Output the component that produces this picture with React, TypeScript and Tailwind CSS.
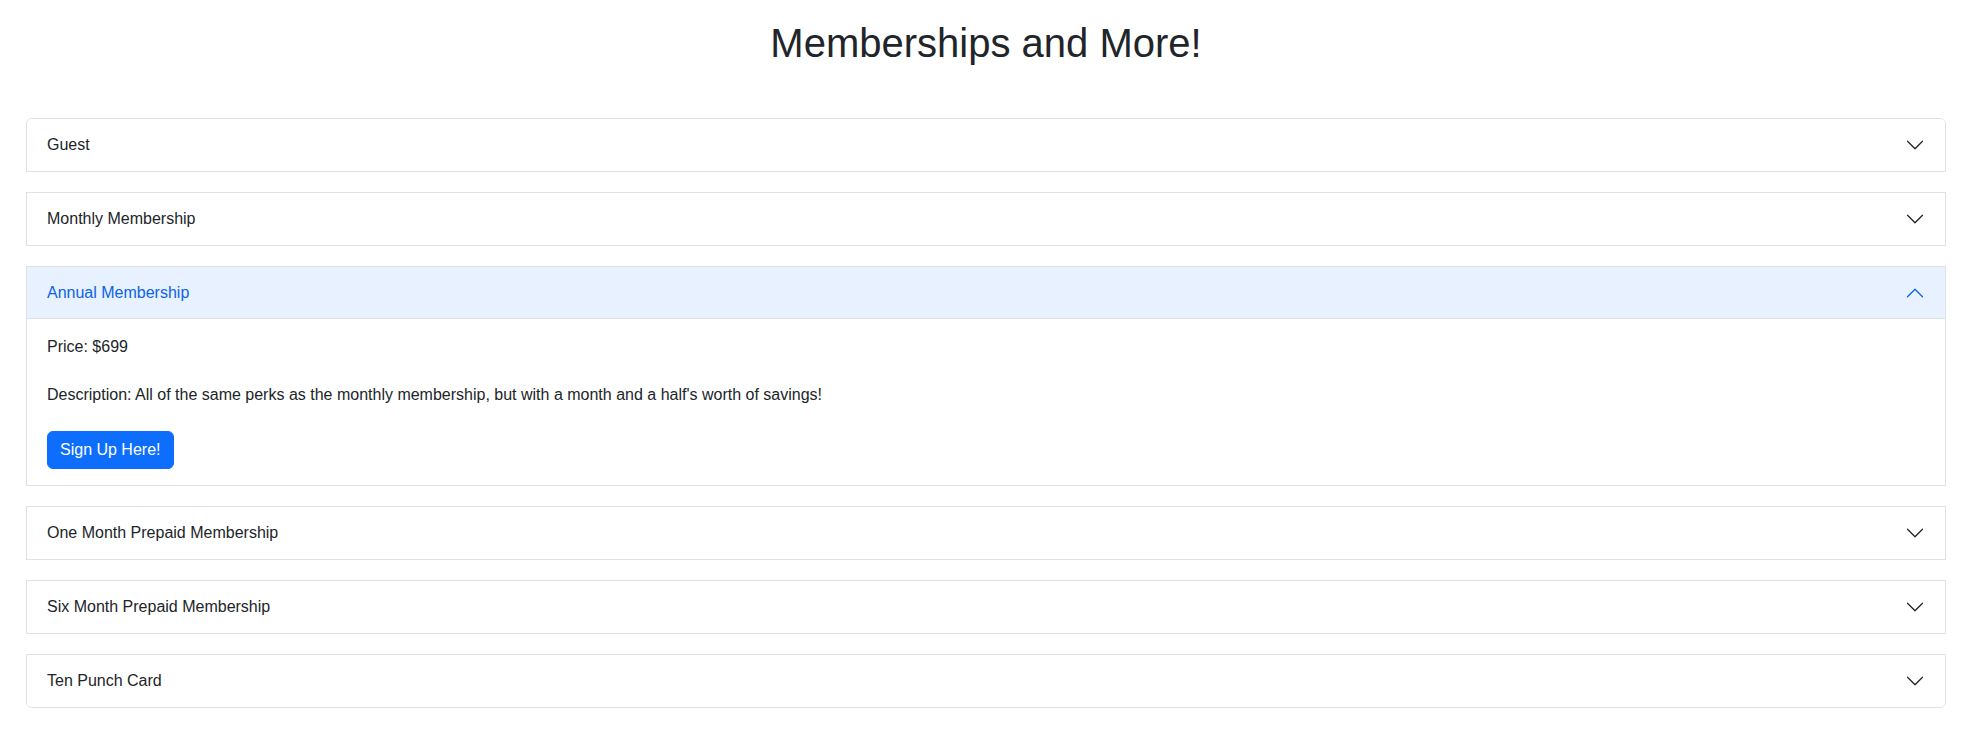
import { useState } from "react";

type Plan = {
  id: string;
  name: string;
  price?: string;
  description?: string;
};

const plans: Plan[] = [
  { id: "guest", name: "Guest" },
  { id: "monthly", name: "Monthly Membership" },
  {
    id: "annual",
    name: "Annual Membership",
    price: "$699",
    description: "All of the same perks as the monthly membership, but with a month and a half's worth of savings!",
  },
  { id: "one-month", name: "One Month Prepaid Membership" },
  { id: "six-month", name: "Six Month Prepaid Membership" },
  { id: "ten-punch", name: "Ten Punch Card" },
];

function Chevron({ open }: { open: boolean }) {
  return (
    <svg
      className={`h-5 w-5 shrink-0 transition-transform ${open ? "rotate-180 text-[#0c63e4]" : "text-[#212529]"}`}
      viewBox="0 0 16 16"
      fill="currentColor"
    >
      <path
        fillRule="evenodd"
        d="M1.646 4.646a.5.5 0 0 1 .708 0L8 10.293l5.646-5.647a.5.5 0 0 1 .708.708l-6 6a.5.5 0 0 1-.708 0l-6-6a.5.5 0 0 1 0-.708z"
      />
    </svg>
  );
}

export default function App() {
  const [open, setOpen] = useState<string | null>("annual");

  return (
    <div className="min-h-screen bg-white pl-[26px] pr-[18px] pt-[19px] font-['Liberation_Sans',Arial,sans-serif] text-[#212529]">
      <h1 className="mb-[51px] text-center text-[40px] leading-[48px] font-normal">Memberships and More!</h1>
      <div>
        {plans.map((plan, i) => {
          const isOpen = open === plan.id;
          const first = i === 0;
          const last = i === plans.length - 1;
          return (
            <div
              key={plan.id}
              className={`mb-5 border border-[#dee2e6] bg-white ${first ? "rounded-t-[6px]" : ""} ${last ? "rounded-b-[6px]" : ""}`}
            >
              <button
                type="button"
                onClick={() => setOpen(isOpen ? null : plan.id)}
                className={`flex w-full items-center justify-between px-5 py-[14px] text-left text-base leading-6 ${
                  isOpen ? "bg-[#e7f1ff] text-[#0c63e4] shadow-[inset_0_-1px_0_#dee2e6]" : "bg-white text-[#212529]"
                } ${first ? "rounded-t-[5px]" : ""} ${last && !isOpen ? "rounded-b-[5px]" : ""}`}
              >
                <span>{plan.name}</span>
                <Chevron open={isOpen} />
              </button>
              {isOpen && (
                <div className="px-5 py-4 text-base leading-6">
                  <p className="mb-6">Price: {plan.price ?? "TBD"}</p>
                  <p className="mb-6">Description: {plan.description ?? ""}</p>
                  <button
                    type="button"
                    className="rounded-[6px] border border-[#0d6efd] bg-[#0d6efd] px-3 py-[6px] text-base leading-6 text-white hover:bg-[#0b5ed7]"
                  >
                    Sign Up Here!
                  </button>
                </div>
              )}
            </div>
          );
        })}
      </div>
    </div>
  );
}
